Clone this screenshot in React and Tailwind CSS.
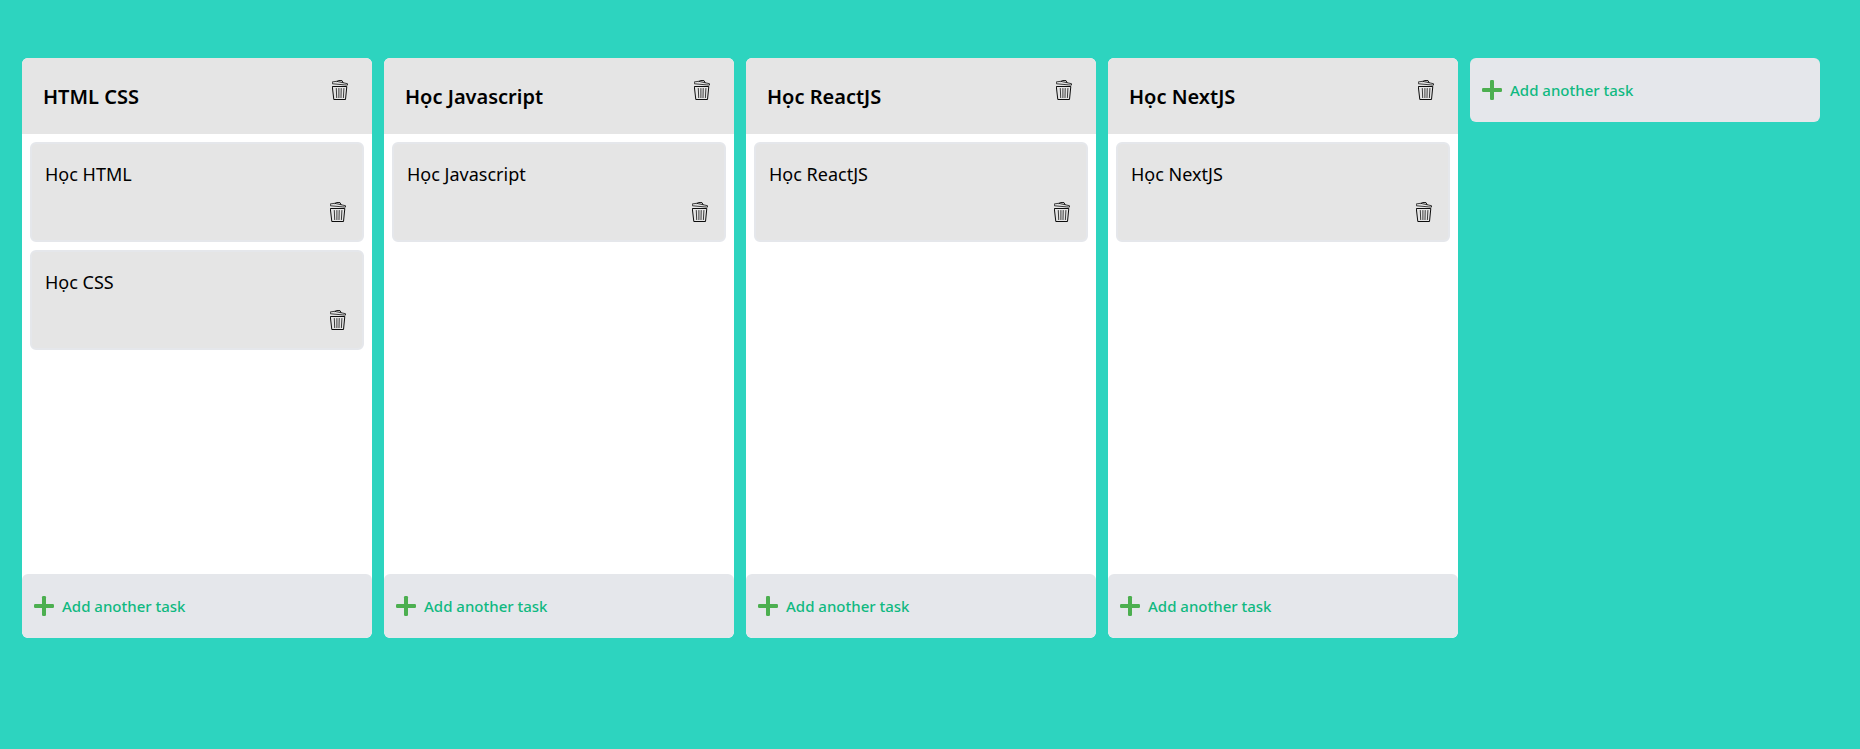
const lists = [
  { title: "HTML CSS", tasks: ["Học HTML", "Học CSS"] },
  { title: "Học Javascript", tasks: ["Học Javascript"] },
  { title: "Học ReactJS", tasks: ["Học ReactJS"] },
  { title: "Học NextJS", tasks: ["Học NextJS"] },
];

function TrashIcon() {
  return (
    <svg
      viewBox="0 0 16 20"
      className="h-5 w-4"
      fill="none"
      stroke="#000"
      strokeLinejoin="round"
      strokeLinecap="round"
      aria-hidden="true"
    >
      <path d="M.6 1.9 4.6 1.3 15.5 3.7V5.1L12.8 4.9.7 3.8Z" strokeWidth=".75" />
      <path d="M5 1.4 6.4.5 10 .6 11 2.5" strokeWidth=".9" />
      <path d="M.7 6.5H14.8L13.5 19.5H2.2Z" strokeWidth=".95" />
      <path d="M4.3 8.5 4.7 17.6M6.9 8.5V17.6M9.2 8.5 9 17.6M11.9 8.5 11.4 17.6" strokeWidth=".75" />
    </svg>
  );
}

function PlusIcon() {
  return (
    <svg viewBox="0 0 20 20" className="size-5 shrink-0" fill="#4caf50" aria-hidden="true">
      <rect x="8" y="0" width="4" height="20" rx="1.2" />
      <rect x="0" y="8" width="20" height="4" rx="1.2" />
    </svg>
  );
}

function DeleteButton({ label }) {
  return (
    <button type="button" aria-label={label} className="cursor-pointer">
      <TrashIcon />
    </button>
  );
}

function AddButton() {
  return (
    <button
      type="button"
      className="flex h-16 w-full cursor-pointer items-center gap-2 rounded-md bg-[#e5e7eb] px-3 text-[15px] leading-6 font-medium text-[#10b981]"
    >
      <PlusIcon />
      Add another task
    </button>
  );
}

function List({ title, tasks }) {
  return (
    <section className="flex min-h-[580px] flex-col overflow-hidden rounded-md bg-white">
      <header className="flex items-start justify-between bg-[#e5e5e5] py-[22px] pr-6 pl-[21px]">
        <h2 className="h-8 pt-[3px] text-xl leading-7 font-semibold text-black">{title}</h2>
        <DeleteButton label={`Delete list ${title}`} />
      </header>
      <ul className="flex flex-1 flex-col gap-2 p-2">
        {tasks.map((task) => (
          <li
            key={task}
            className="flex h-[100px] flex-col justify-between rounded-md border-2 border-[#e5e7eb] bg-[#e5e5e5] pt-4 pr-4 pb-[18px] pl-[13px]"
          >
            <p className="text-lg leading-7 font-normal text-black">{task}</p>
            <div className="flex justify-end">
              <DeleteButton label={`Delete task ${task}`} />
            </div>
          </li>
        ))}
      </ul>
      <AddButton />
    </section>
  );
}

export default function App() {
  return (
    <main className="grid min-h-screen grid-cols-5 items-start gap-3 bg-[#2dd4bf] pt-[58px] pr-10 pb-10 pl-[22px] font-['Noto_Sans','Open_Sans',sans-serif]">
      {lists.map((list) => (
        <List key={list.title} title={list.title} tasks={list.tasks} />
      ))}
      <AddButton />
    </main>
  );
}
